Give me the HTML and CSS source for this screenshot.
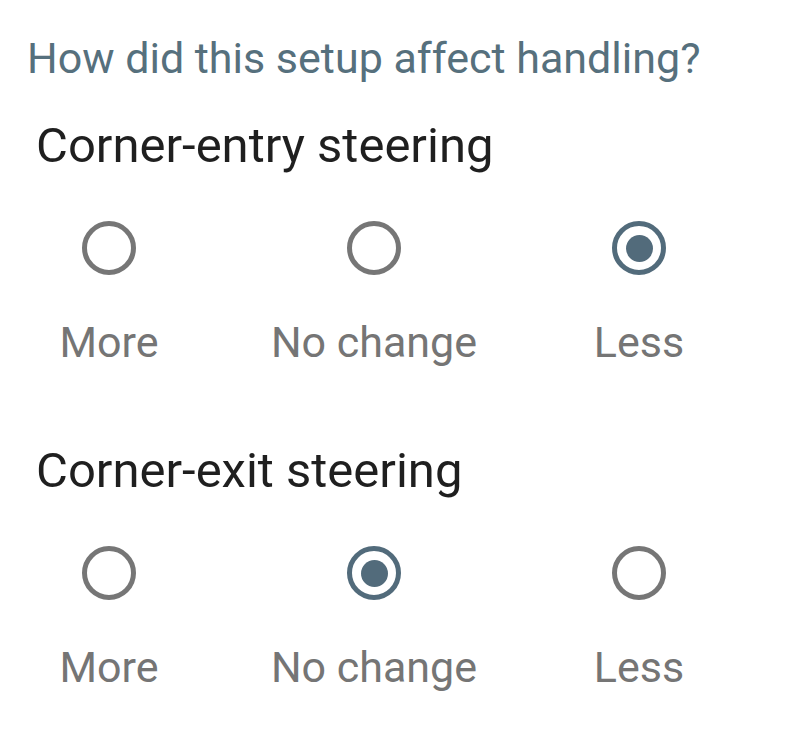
FILE: index.html
```html
<!DOCTYPE html>
<html>
<head>
<meta charset="utf-8">
<link rel="stylesheet" href="styles.css">
</head>
<body>
<div class="page">
  <div class="question">How did this setup affect handling?</div>
  <div class="group">
    <div class="group-title">Corner-entry steering</div>
    <div class="options">
      <div class="option"><span class="radio"></span><span class="label">More</span></div>
      <div class="option"><span class="radio"></span><span class="label">No change</span></div>
      <div class="option"><span class="radio checked"></span><span class="label">Less</span></div>
    </div>
  </div>
  <div class="group">
    <div class="group-title">Corner-exit steering</div>
    <div class="options">
      <div class="option"><span class="radio"></span><span class="label">More</span></div>
      <div class="option"><span class="radio checked"></span><span class="label">No change</span></div>
      <div class="option"><span class="radio"></span><span class="label">Less</span></div>
    </div>
  </div>
</div>
</body>
</html>
```
FILE: styles.css
```css
html, body {
  margin: 0;
  padding: 0;
  background: #ffffff;
}
body {
  font-family: Roboto, "Liberation Sans", sans-serif;
}
.page {
  padding-top: 33px;
}
.question {
  padding-left: 27px;
  font-size: 43px;
  line-height: 50px;
  color: #56707d;
}
.group {
  padding-top: 34px;
}
.group + .group {
  padding-top: 75px;
}
.group-title {
  padding-left: 36px;
  font-size: 49px;
  line-height: 58px;
  color: #1f1f1f;
}
.options {
  display: grid;
  grid-template-columns: repeat(3, 218px);
  column-gap: 47px;
  margin-top: 46px;
}
.option {
  display: flex;
  flex-direction: column;
  align-items: center;
}
.radio {
  width: 54px;
  height: 54px;
  box-sizing: border-box;
  border: 5px solid #767676;
  border-radius: 50%;
  display: flex;
  align-items: center;
  justify-content: center;
}
.radio.checked {
  border-color: #526b7b;
}
.radio.checked::after {
  content: "";
  width: 27px;
  height: 27px;
  border-radius: 50%;
  background: #526b7b;
}
.label {
  margin-top: 42px;
  font-size: 43px;
  line-height: 50px;
  color: #757575;
}
```
